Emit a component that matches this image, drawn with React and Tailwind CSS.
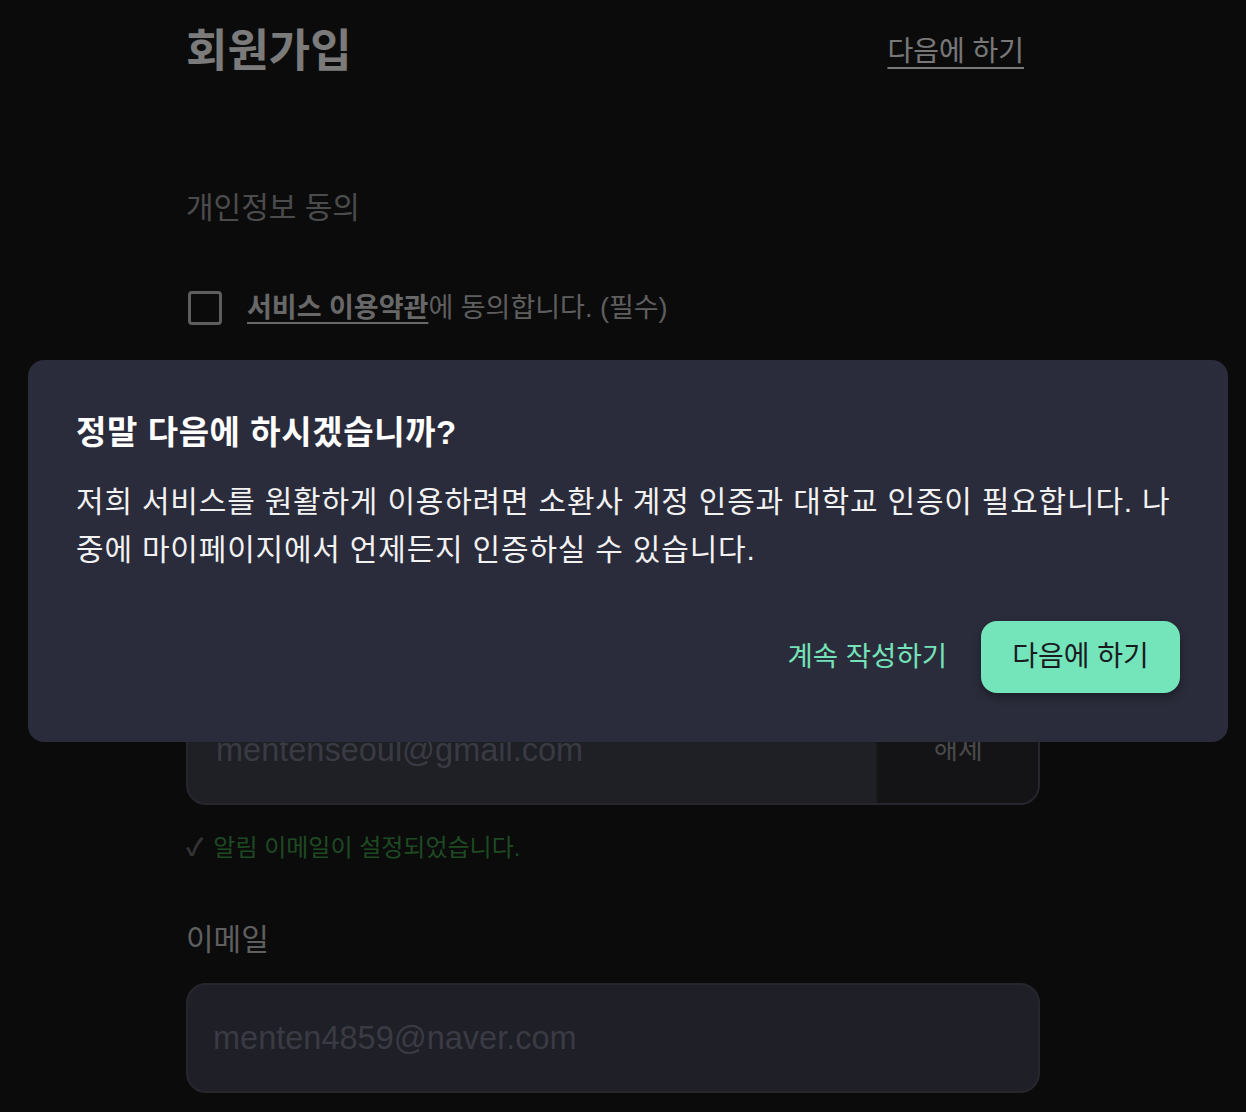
import { useState } from "react";

function AgreeRow({ bold, rest }) {
  return (
    <div className="flex items-center h-[40px] gap-[25px] pl-[2px]">
      <span className="w-[34px] h-[34px] border-[3px] border-[#bcbcbc] rounded-[4px] shrink-0" />
      <p className="text-[27px] text-[#bcbcbc] leading-[40px]">
        <span className="font-bold underline underline-offset-[5px] decoration-2 text-[#d0d0d0]">{bold}</span>
        {rest}
      </p>
    </div>
  );
}

export default function App() {
  const [showModal, setShowModal] = useState(true);

  return (
    <div className="min-h-screen bg-[#161619] font-['Liberation_Sans','Noto_Sans_CJK_KR',sans-serif]">
      <div className="w-[854px] ml-[186px] pt-[22px] pb-[80px] flex flex-col">
        {/* Header */}
        <div className="flex items-center justify-between h-[56px]">
          <h1 className="text-[45px] font-bold text-[#f6f6f6] leading-[56px] mt-[4px]">회원가입</h1>
          <button className="text-[28px] text-[#f0f0f0] underline underline-offset-[6px] decoration-2 mr-[16px] mt-[4px]">
            다음에 하기
          </button>
        </div>

        {/* 개인정보 동의 */}
        <h2 className="mt-[110px] text-[30px] leading-[40px] text-[#969696]">개인정보 동의</h2>
        <div className="mt-[60px] flex flex-col gap-[40px]">
          <AgreeRow bold="서비스 이용약관" rest="에 동의합니다. (필수)" />
          <AgreeRow bold="개인정보 처리방침" rest="에 동의합니다. (필수)" />
          <AgreeRow bold="마케팅 정보 수신" rest="에 동의합니다. (선택)" />
        </div>

        {/* 알림 이메일 */}
        <h2 className="mt-[142px] text-[30px] leading-[40px] text-[#bebebe]">알림 이메일</h2>
        <div className="mt-[25px] h-[110px] flex rounded-[20px] border-2 border-[#4c4c58] bg-[#3e3e4c] overflow-hidden">
          <div className="flex-1 flex items-center pl-[28px] text-[32.5px] text-[#747486]">
            mentenseoul@gmail.com
          </div>
          <button className="w-[162px] border-l-2 border-[#303038] bg-[#28282f] text-[27px] text-[#949494]">
            해제
          </button>
        </div>
        <div className="mt-[28px] h-[30px] flex items-center gap-[10px]">
          <span className="text-[24px] text-[#666666] font-bold">✓</span>
          <span className="text-[24px] text-[#3c9444]">알림 이메일이 설정되었습니다.</span>
        </div>

        {/* 이메일 */}
        <h2 className="mt-[57px] text-[30px] leading-[40px] text-[#bebebe]">이메일</h2>
        <div className="mt-[23px] h-[110px] flex items-center rounded-[20px] border-2 border-[#4c4c58] bg-[#3e3e4e] pl-[25px] text-[32.5px] text-[#747488]">
          menten4859@naver.com
        </div>
      </div>

      {/* Dialog */}
      {showModal && (
        <div className="fixed inset-0 bg-black/50 flex items-center justify-center pl-[10px] pb-[10px]">
          <div className="w-[1200px] bg-[#2b2c3b] rounded-[16px] px-[48px] pt-[50px] pb-[49px]">
            <h3 className="text-[33px] tracking-[0.6px] font-bold text-white leading-[46px]">정말 다음에 하시겠습니까?</h3>
            <p className="mt-[22px] text-[30px] tracking-[0.8px] leading-[48px] text-[#f2f2f2]">
              저희 서비스를 원활하게 이용하려면 소환사 계정 인증과 대학교 인증이 필요합니다. 나중에 마이페이지에서 언제든지 인증하실 수 있습니다.
            </p>
            <div className="mt-[47px] flex justify-end items-center gap-[34px]">
              <button
                onClick={() => setShowModal(false)}
                className="text-[27.5px] text-[#74e3b9]"
              >
                계속 작성하기
              </button>
              <button className="w-[199px] h-[72px] rounded-[16px] bg-[#74e5bb] text-[28px] text-[#1b1b1f] shadow-[0_4px_8px_rgba(0,0,0,0.35)]">
                다음에 하기
              </button>
            </div>
          </div>
        </div>
      )}
    </div>
  );
}
